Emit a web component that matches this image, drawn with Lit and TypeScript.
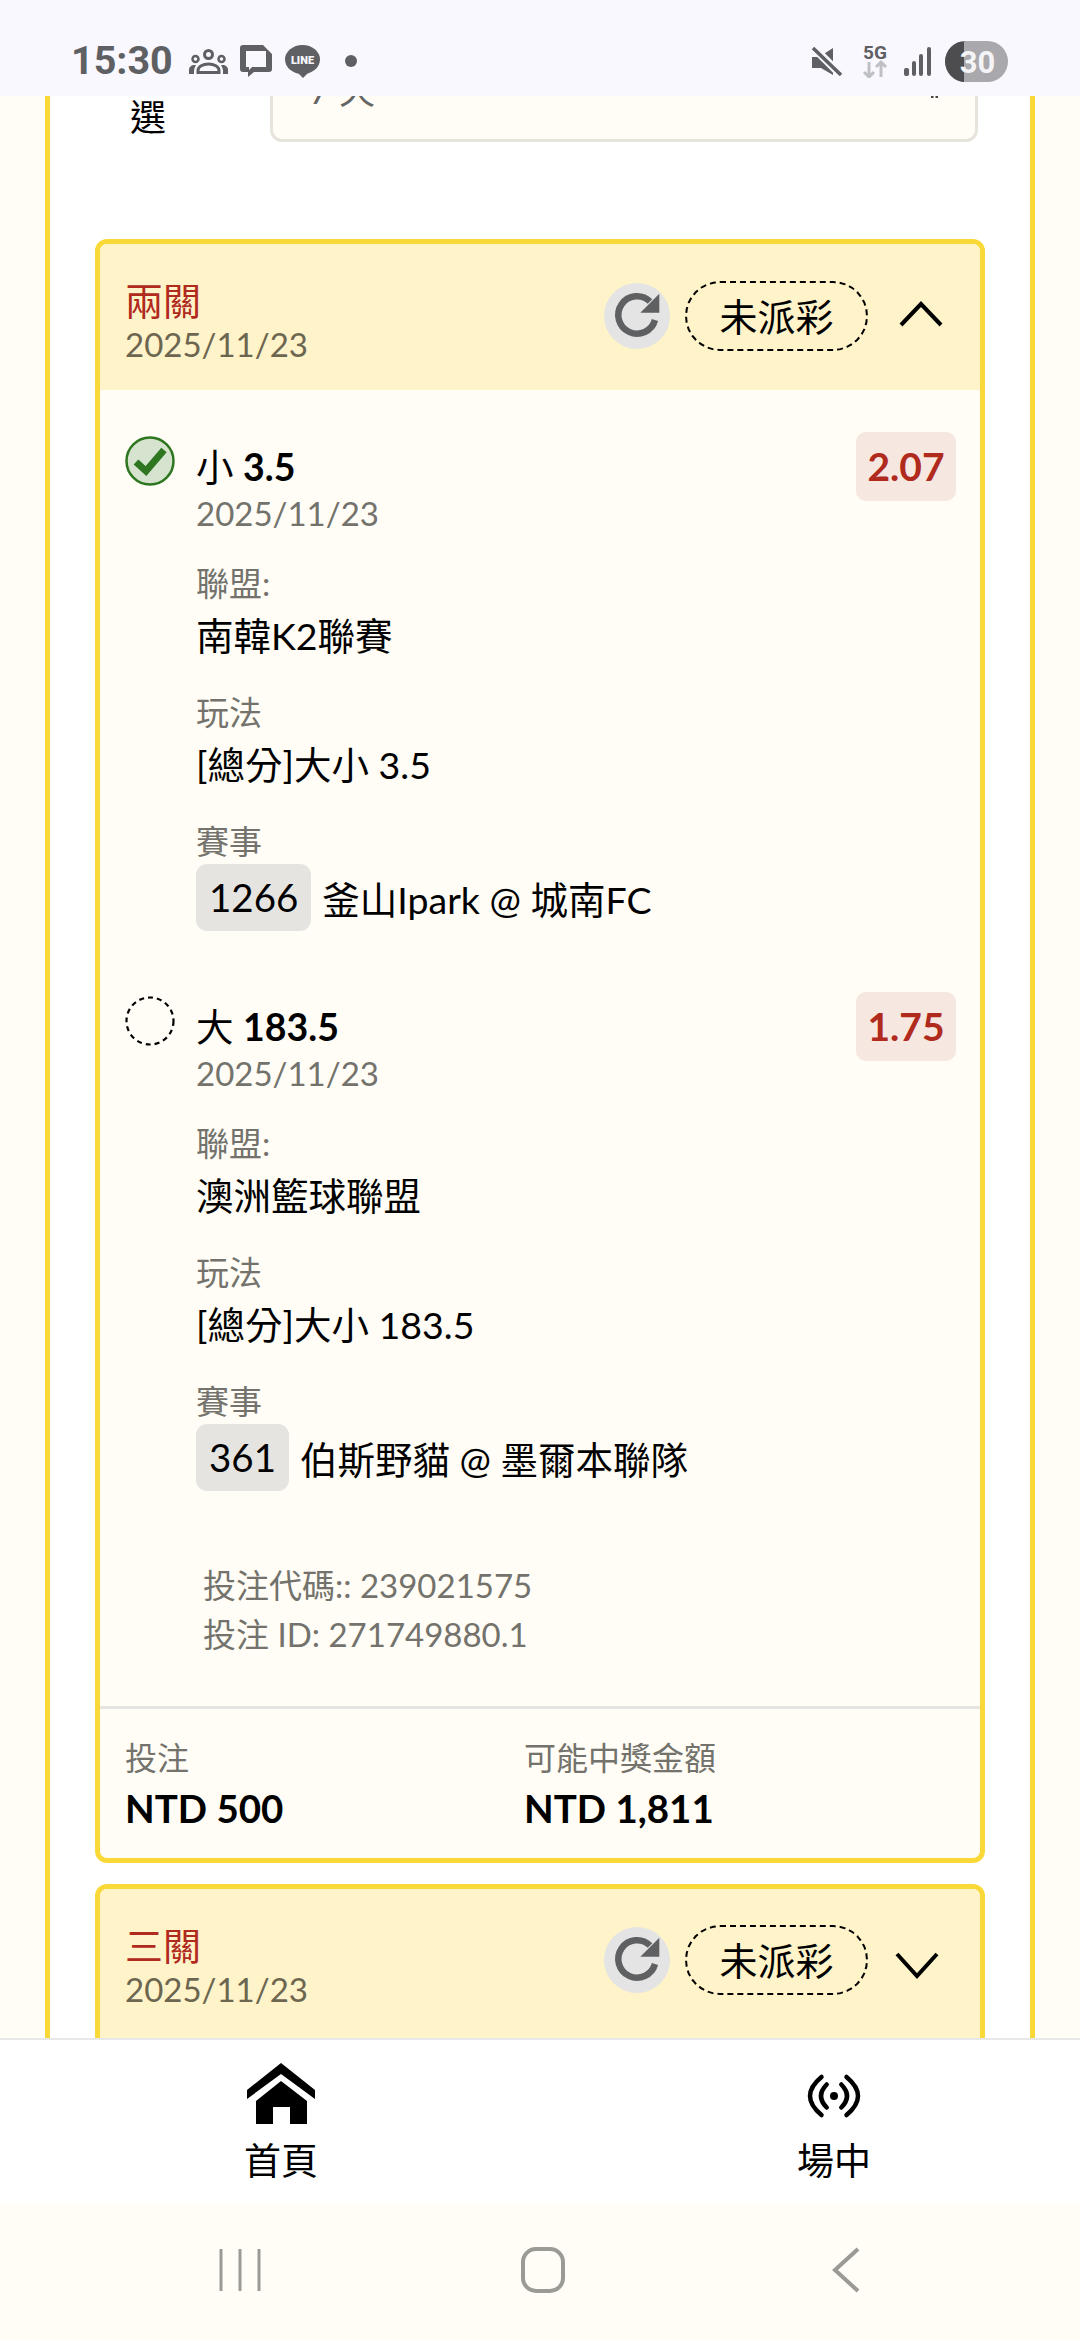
import { LitElement, css, html, svg } from 'lit';
import { customElement } from 'lit/decorators.js';

const legs = [
  { pick: '小', line: '3.5', odds: '2.07', league: '南韓K2聯賽', market: '[總分]大小 3.5', code: '1266', match: '釜山Ipark @ 城南FC', won: true },
  { pick: '大', line: '183.5', odds: '1.75', league: '澳洲籃球聯盟', market: '[總分]大小 183.5', code: '361', match: '伯斯野貓 @ 墨爾本聯隊', won: false },
];

const refreshIcon = svg`<svg class="refresh-icon" viewBox="0 0 66 66">
  <path d="M46 18.500A18.700 18.700 0 1 0 51 37" fill="none" stroke="#5f6062" stroke-width="6.500"/>
  <path d="M55.300 10.700v19h-19z" fill="#5f6062"/>
</svg>`;

@customElement('app-root')
export class AppRoot extends LitElement {
  static styles = css`
    :host {
      display: flex;
      flex-direction: column;
      width: 1080px;
      height: 2340px;
      overflow: hidden;
      background: #fffdf5;
      font-family: Lato, 'Noto Sans CJK TC', sans-serif;
      color: #000;
    }
    .status {
      flex: 0 0 96px;
      box-sizing: border-box;
      display: flex;
      align-items: center;
      justify-content: space-between;
      padding: 26px 72px 0 71px;
      background: #f8f8fe;
      color: #5f6064;
      position: relative;
      z-index: 2;
    }
    .status-left,
    .status-right {
      display: flex;
      align-items: center;
    }
    .clock {
      font: 700 39.5px/1 Roboto, sans-serif;
      margin-right: 16px;
    }
    .status svg {
      display: block;
    }
    .scroll {
      flex: 1;
      min-height: 0;
      overflow: hidden;
      padding: 0 45px;
    }
    .panel {
      margin-top: -60px;
      background: #fff;
      border: solid #f9d838;
      border-width: 0 5px;
      padding: 0 45px;
    }
    .form-row {
      display: flex;
      height: 106px;
      padding-left: 35px;
    }
    .form-label {
      width: 140px;
      font-size: 36px;
      line-height: 46px;
      padding-top: 58px;
    }
    .form-field {
      flex: 1;
      box-sizing: border-box;
      margin-right: 7px;
      background: #fffdf5;
      border: 3px solid #e6e4dc;
      border-radius: 12px;
      padding: 0 37px 0 36px;
      font-size: 36px;
      line-height: 46px;
      color: #666;
      display: flex;
      justify-content: space-between;
    }
    .field-text {
      padding-top: 28px;
    }
    .field-mark {
      margin-top: 57px;
    }
    .card {
      margin-top: 97px;
      border: 5px solid #f9d838;
      border-radius: 12px;
      background: #fffdf5;
      overflow: hidden;
    }
    .card + .card {
      margin-top: 21px;
    }
    .card-head {
      display: flex;
      align-items: flex-start;
      justify-content: space-between;
      padding: 35px 36px 24px 25px;
      background: #fff3c9;
    }
    .card-head.closed {
      padding-bottom: 70px;
    }
    .card-title {
      color: #b02a1e;
      font-size: 38px;
      line-height: 43px;
    }
    .card-date {
      color: #6c6650;
      font-size: 33px;
      line-height: 44px;
    }
    .head-actions {
      display: flex;
      align-items: center;
      gap: 15px;
      margin-top: 2px;
    }
    .closed .head-actions {
      margin-top: 1px;
    }
    .closed .chevron {
      margin-top: 12px;
    }
    .refresh {
      width: 66px;
      height: 66px;
      border-radius: 50%;
      background: #e3e4e3;
    }
    .refresh-icon {
      display: block;
      width: 66px;
      height: 66px;
    }
    .pill {
      width: 183px;
      height: 70px;
      box-sizing: border-box;
      border: 2px dashed #000;
      border-radius: 35px;
      font-size: 38px;
      line-height: 66px;
      text-align: center;
    }
    .chevron {
      width: 46px;
      height: 30px;
      margin-left: 15px;
      fill: none;
      stroke: #000;
      stroke-width: 4;
      overflow: visible;
    }
    .card-body {
      padding: 42px 24px 0 25px;
    }
    .leg {
      display: flex;
      margin-bottom: 61px;
    }
    .check {
      flex: 0 0 50px;
      height: 50px;
      margin: 4px 21px 0 0;
    }
    .leg-main {
      flex: 1;
      padding-top: 12px;
    }
    .pick {
      font-size: 37.5px;
      line-height: 46px;
    }
    .pick b {
      font-weight: 700;
    }
    .muted {
      color: #73726c;
      font-size: 33px;
      line-height: 46px;
    }
    .muted.small {
      font-size: 32px;
    }
    .field {
      margin-top: 23px;
    }
    .field.first {
      margin-top: 24px;
    }
    .value {
      font-size: 37.5px;
      line-height: 60px;
    }
    .match {
      display: flex;
      align-items: center;
      gap: 11px;
      font-size: 37.5px;
    }
    .code {
      background: #e5e4e0;
      border-radius: 11px;
      padding: 0 13px;
      font-size: 38.5px;
      line-height: 67px;
    }
    .odds {
      flex: none;
      align-self: flex-start;
      box-sizing: border-box;
      width: 100px;
      height: 69px;
      border-radius: 10px;
      background: #f6e8e0;
      color: #b02a1e;
      font-size: 39px;
      font-weight: 700;
      line-height: 69px;
      text-align: center;
    }
    .ids {
      margin: 70px 0 47px 78px;
      color: #73726c;
      font-size: 33px;
      line-height: 49px;
    }
    .card-foot {
      display: grid;
      grid-template-columns: 399px 1fr;
      padding: 26px 25px 27px;
      border-top: 3px solid #e5e4e0;
    }
    .amount {
      margin-top: 4px;
      font-size: 38.5px;
      font-weight: 700;
      line-height: 46px;
    }
    .tabs {
      position: relative;
      z-index: 1;
      flex: 0 0 165px;
      box-sizing: border-box;
      display: flex;
      justify-content: space-between;
      padding: 23px 209px 0 244px;
      background: #fff;
      border-top: 2px solid #e8e8e8;
    }
    .tab {
      width: 74px;
      display: flex;
      flex-direction: column;
      align-items: center;
      font-size: 37px;
      line-height: 46px;
      white-space: nowrap;
    }
    .tab svg {
      display: block;
      height: 62px;
      margin-bottom: 13px;
    }
    .sysnav {
      flex: 0 0 137px;
      display: flex;
      align-items: flex-start;
      justify-content: center;
      padding-top: 44px;
      box-sizing: border-box;
      background: #fffdf5;
    }
    .sysnav svg {
      display: block;
      fill: none;
      stroke: #9b9b96;
    }
  `;

  private renderHead(title: string, open: boolean) {
    return html`
      <div class="card-head ${open ? '' : 'closed'}">
        <div>
          <div class="card-title">${title}</div>
          <div class="card-date">2025/11/23</div>
        </div>
        <div class="head-actions">
          <div class="refresh">${refreshIcon}</div>
          <div class="pill">未派彩</div>
          <svg class="chevron" viewBox="0 0 46 30">
            <path d=${open ? 'M3 24 23 3l20 21' : 'M-1 3l20 22L39 3'} />
          </svg>
        </div>
      </div>
    `;
  }

  private renderLeg(leg: (typeof legs)[number]) {
    return html`
      <div class="leg">
        <svg class="check" viewBox="0 0 50 50">
          ${leg.won
            ? svg`<circle cx="25" cy="25" r="23.500" fill="#d5e3cf" stroke="#2e7620" stroke-width="2.500"/>
                <path d="M11 26l10 9 18-21" fill="none" stroke="#2e7620" stroke-width="7"/>`
            : svg`<circle cx="25" cy="25" r="23.500" fill="none" stroke="#000" stroke-width="2.200" stroke-dasharray="5 4"/>`}
        </svg>
        <div class="leg-main">
          <div class="pick">${leg.pick} <b>${leg.line}</b></div>
          <div class="muted">2025/11/23</div>
          <div class="field first">
            <div class="muted">聯盟:</div>
            <div class="value">${leg.league}</div>
          </div>
          <div class="field">
            <div class="muted">玩法</div>
            <div class="value">${leg.market}</div>
          </div>
          <div class="field">
            <div class="muted">賽事</div>
            <div class="match"><span class="code">${leg.code}</span><span>${leg.match}</span></div>
          </div>
        </div>
        <div class="odds">${leg.odds}</div>
      </div>
    `;
  }

  render() {
    return html`
      <div class="status">
        <div class="status-left">
          <span class="clock">15:30</span>
          <svg width="39" height="25" viewBox="0 0 39 25" fill="#5f6064">
            <circle cx="19.500" cy="5.500" r="4" fill="none" stroke="#5f6064" stroke-width="3"/>
            <circle cx="6.500" cy="10" r="3" fill="none" stroke="#5f6064" stroke-width="2.500"/>
            <circle cx="32.500" cy="10" r="3" fill="none" stroke="#5f6064" stroke-width="2.500"/>
            <path d="M0 25v-4c0-3 2-5 6-5h1c-1 2-2 4-2 6v3zM39 25v-4c0-3-2-5-6-5h-1c1 2 2 4 2 6v3z"/>
            <path d="M9 23.500v-2c0-4 5-6.500 10.500-6.500S30 17.500 30 21.500v2z" fill="none" stroke="#5f6064" stroke-width="3"/>
          </svg>
          <svg style="margin-left:12px" width="32" height="32" viewBox="0 0 32 32" fill="#5f6064">
            <path fill-rule="evenodd" d="M3 0H23L32 9V24a3 3 0 0 1-3 3H14L8 32V27H3a3 3 0 0 1-3-3V3a3 3 0 0 1 3-3zM6 6V22H9V25L12 22H26V6z"/>
          </svg>
          <svg style="margin-left:13px" width="35" height="33" viewBox="0 0 35 33">
            <ellipse cx="17.500" cy="14.500" rx="17.500" ry="14.500" fill="#5f6064"/>
            <path fill="#5f6064" d="M12 27l6 6 7-7z"/>
            <text x="17.500" y="18.500" text-anchor="middle" font-family="Roboto, sans-serif" font-size="11" font-weight="900" fill="#f8f8fe">LINE</text>
          </svg>
          <svg style="margin-left:25px" width="12" height="12" viewBox="0 0 12 12"><circle cx="6" cy="6" r="6" fill="#5f6064"/></svg>
        </div>
        <div class="status-right">
          <svg width="30" height="29" viewBox="0 0 30 29" fill="#5f6064">
            <path d="M0 10h7L21 1v27L9 21H0z"/>
            <path d="M1 0l28 28" stroke="#f8f8fe" stroke-width="8"/>
            <path d="M1 1l28 27" stroke="#5f6064" stroke-width="3.500"/>
          </svg>
          <svg style="margin-left:20px" width="26" height="33" viewBox="0 0 26 33">
            <text x="13" y="14" text-anchor="middle" font-family="Roboto, sans-serif" font-size="19" font-weight="700" fill="#5f6064">5G</text>
            <path d="M7 17v15M2 27l5 5 5-5M19 32V17M14 22l5-5 5 5" fill="none" stroke="#bfc0c4" stroke-width="3"/>
          </svg>
          <svg style="margin-left:16px" width="27" height="29" viewBox="0 0 27 29" fill="#5f6064">
            <rect x="0" y="21" width="5" height="8" rx="2"/><rect x="8" y="14" width="4" height="15" rx="2"/><rect x="15" y="7" width="4" height="22" rx="2"/><rect x="23" y="0" width="4" height="29" rx="2"/>
          </svg>
          <svg style="margin-left:14px" width="63" height="41" viewBox="0 0 63 41">
            <rect width="63" height="41" rx="20.500" fill="#a9a8ac"/>
            <path d="M19 0v41h1.500a20.500 20.500 0 0 1 0-41z" fill="#4d4d50"/>
            <text x="32.500" y="32" text-anchor="middle" font-family="Roboto, sans-serif" font-size="31" font-weight="700" fill="#f4f4f6">30</text>
          </svg>
        </div>
      </div>

      <div class="scroll">
        <div class="panel">
          <div class="form-row">
            <div class="form-label">選</div>
            <div class="form-field">
              <span class="field-text">7 天</span>
              <svg class="field-mark" width="7" height="3" viewBox="0 0 7 3" fill="#444"><rect width="2.500" height="2"/><rect x="4.500" width="2.500" height="2"/></svg>
            </div>
          </div>

          <div class="card">
            ${this.renderHead('兩關', true)}
            <div class="card-body">
              ${legs.map((leg) => this.renderLeg(leg))}
              <div class="ids">
                <div>投注代碼:: 239021575</div>
                <div>投注 ID: 271749880.1</div>
              </div>
            </div>
            <div class="card-foot">
              <div>
                <div class="muted small">投注</div>
                <div class="amount">NTD 500</div>
              </div>
              <div>
                <div class="muted small">可能中獎金額</div>
                <div class="amount">NTD 1,811</div>
              </div>
            </div>
          </div>

          <div class="card">
            ${this.renderHead('三關', false)}
          </div>
        </div>
      </div>

      <div class="tabs">
        <div class="tab">
          <svg width="68" viewBox="0 0 68 62">
            <path d="M34 0 68 27v9L34 11 0 36v-9z"/>
            <path fill-rule="evenodd" d="M34 18 60 38v23H43V44H26v17H9V38z"/>
          </svg>
          首頁
        </div>
        <div class="tab">
          <svg width="56" viewBox="0 -9 56 62" fill="none" stroke="#000" stroke-width="4.500" stroke-linecap="round">
            <circle cx="28" cy="24" r="4" fill="#000" stroke="none"/>
            <path d="M20.700 12.500Q9.300 24 20.700 35.500M35.300 12.500Q46.700 24 35.300 35.500M15.500 5Q-7.500 24 15.500 43M40.500 5Q63.500 24 40.500 43"/>
          </svg>
          場中
        </div>
      </div>

      <div class="sysnav">
        <svg width="42" height="46" viewBox="0 0 42 46" stroke-width="3" style="margin-right:259px">
          <path d="M2 2v42M21 2v42M40 2v42"/>
        </svg>
        <svg width="46" height="46" viewBox="0 0 46 46" stroke-width="4" style="margin-right:265px">
          <rect x="3" y="2" width="40" height="42" rx="13"/>
        </svg>
        <svg width="30" height="46" viewBox="0 0 30 46" stroke-width="4">
          <path d="M27 2 4 23l23 21"/>
        </svg>
      </div>
    `;
  }
}
